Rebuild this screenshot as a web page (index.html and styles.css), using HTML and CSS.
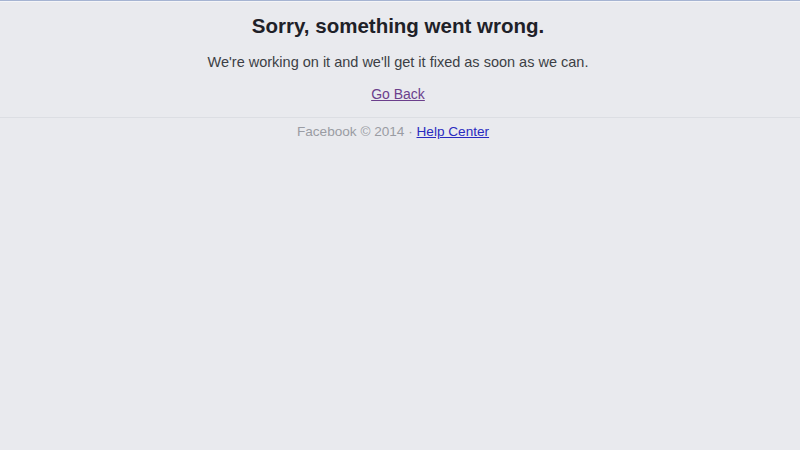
FILE: index.html
```html
<!DOCTYPE html>
<html>
  <head>
    <title>Sorry, something went wrong.</title>
    <link rel="stylesheet" href="styles.css">
  </head>
  <body>
    <div class="topbar"></div>
    <div class="content">
      <h2 class="title">Sorry, something went wrong.</h2>
      <p class="message">We're working on it and we'll get it fixed as soon as we can.</p>
      <p class="back"><a href="#">Go Back</a></p>
    </div>
    <div class="footer">
      <span class="copy">Facebook © 2014 · </span><a class="help" href="#">Help Center</a>
    </div>
  </body>
</html>
```

FILE: styles.css
```css
body {
  margin: 0;
  background: #e9eaee;
  font-family: "Liberation Sans", Arial, sans-serif;
  font-size: 14px;
}
.topbar {
  height: 1px;
  background: #a6b4d2;
  border-bottom: 1px solid #f4f5f8;
}
.content {
  text-align: center;
  padding: 11px 4px 14px 0;
  border-bottom: 1px solid #dcdee3;
}
.title {
  margin: 0;
  font-size: 20.5px;
  line-height: 26px;
  color: #1e2128;
}
.message {
  margin: 14px 0 0;
  font-size: 14.5px;
  line-height: 18px;
  color: #3c3f45;
}
.back {
  margin: 14px 0 0;
  line-height: 18px;
}
.back a {
  color: #6b3f8c;
}
.footer {
  text-align: center;
  padding: 5px 14px 0 0;
  font-size: 13.6px;
  line-height: 18px;
}
.copy {
  color: #9a9ca3;
}
.help {
  color: #2a2ac0;
}
```
